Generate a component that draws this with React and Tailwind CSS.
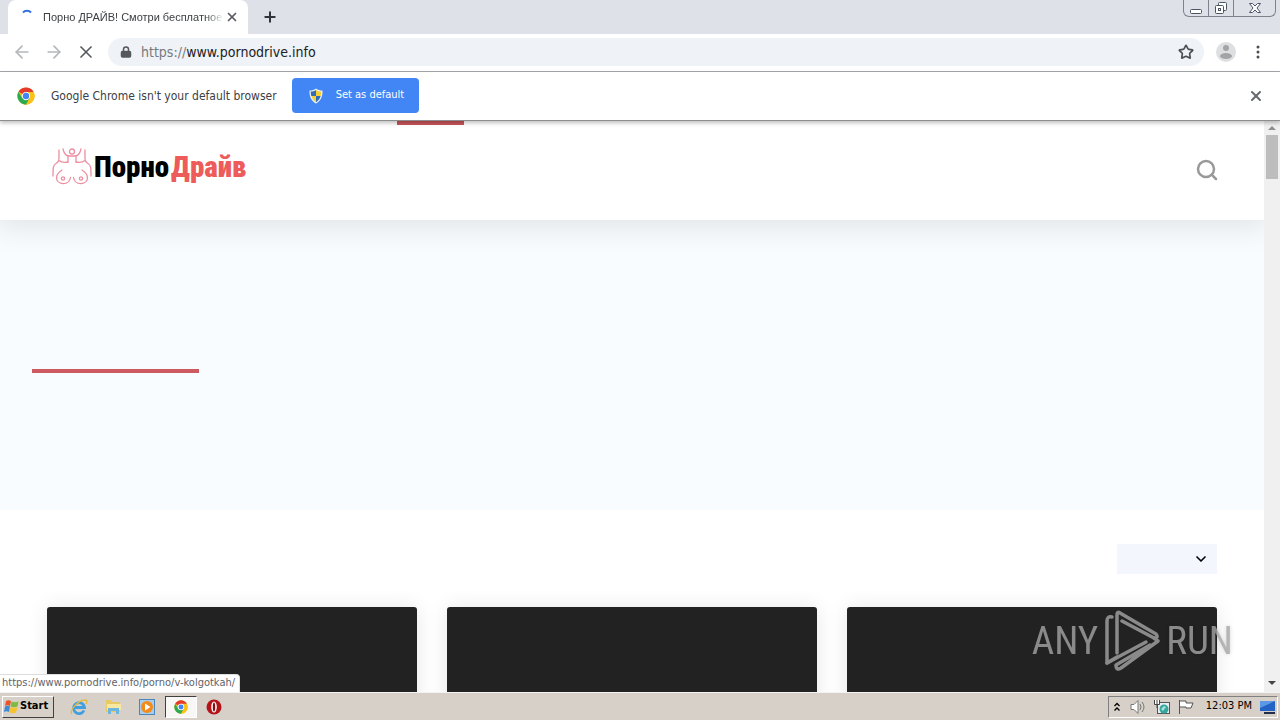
import { useState } from 'react';
import { ArrowLeft, ArrowRight, X, Plus, Lock, Star, Search, ChevronDown } from 'lucide-react';

const ui = "font-['DejaVu_Sans_Condensed','Noto_Sans',sans-serif]";

function ChromeLogo({ className }) {
  return (
    <svg viewBox="0 0 48 48" className={className} aria-hidden="true">
      <circle cx="24" cy="24" r="23" fill="#fbc116" />
      <path d="M24 24 4.1 12.5A23 23 0 0 1 43.9 12.5L44 13H24Z" fill="#e33b2e" />
      <path d="M4.1 12.5A23 23 0 0 0 24 47L34 30 24 24 14 30Z" fill="#2da94f" />
      <path d="M24 47 34 30 36 24 33 14H44.7A23 23 0 0 1 24 47Z" fill="#fbc116" />
      <circle cx="24" cy="24" r="11" fill="#fff" />
      <circle cx="24" cy="24" r="8.5" fill="#4285f4" />
    </svg>
  );
}

function TabStrip() {
  return (
    <header className="flex h-[34px] shrink-0 items-end justify-between bg-[#dee1e8]">
      <div className="flex h-full items-end pl-2">
        <div className="flex h-full w-60 items-center rounded-t-lg bg-white pr-2 pl-[11px]">
          <svg viewBox="0 0 16 16" className="mr-2 size-4 shrink-0" fill="none" stroke="#2f6fe0" strokeWidth="2">
            <path d="M4 3.5C6 1.3 10 1.3 12 3.5" />
          </svg>
          <span className="min-w-0 flex-1 mask-r-from-90% font-['Liberation_Sans',sans-serif] text-[11px] whitespace-nowrap text-[#3c4043]">
            Порно ДРАЙВ! Смотри бесплатное
          </span>
          <button aria-label="Close tab" className="grid size-4 place-items-center text-[#5a5d61]">
            <X className="size-3.5" strokeWidth={3} />
          </button>
        </div>
        <button aria-label="New tab" className="ml-3 grid h-full w-5 place-items-center text-[#303338]">
          <Plus className="size-4" strokeWidth={3} />
        </button>
      </div>
      <div className="mr-1 flex h-[17px] self-start rounded-b-md border border-t-0 border-[#7d828c] text-[#4b5563]">
        <button aria-label="Minimize" className="grid w-[25px] place-items-center border-r border-[#7d828c]">
          <svg viewBox="0 0 12 14" className="h-3.5 w-3" fill="#fff" stroke="currentColor">
            <rect x=".5" y="8.500" width="11" height="4" rx="1" />
          </svg>
        </button>
        <button aria-label="Restore" className="grid w-[25px] place-items-center border-r border-[#7d828c]">
          <svg viewBox="0 0 14 14" className="size-3.5" fill="#fff" stroke="currentColor">
            <rect x="4.500" y="1.500" width="8" height="8" rx="1" />
            <rect x="1.500" y="4.500" width="8" height="8" rx="1" />
            <rect x="4.500" y="7.500" width="2" height="2" />
          </svg>
        </button>
        <button aria-label="Close" className="grid w-[41px] place-items-center">
          <svg viewBox="0 0 12 12" className="size-3" fill="#fff" stroke="currentColor">
            <path d="M.5 1.500h3L6 4l2.500-2.500h3L8 6l3.500 4.500h-3L6 8l-2.500 2.500h-3L4 6Z" />
          </svg>
        </button>
      </div>
    </header>
  );
}

function Toolbar() {
  const [url, setUrl] = useState('https://www.pornodrive.info');
  const rest = url.replace(/^https:\/\//, '');

  return (
    <nav className="flex h-[38px] shrink-0 items-center border-b border-[#a5a7aa] bg-white px-3 pb-0.5">
      <button aria-label="Back" className="mr-3 text-[#b4b6b9]"><ArrowLeft className="size-5" /></button>
      <button aria-label="Forward" className="mr-3 text-[#b4b6b9]"><ArrowRight className="size-5" /></button>
      <button aria-label="Stop" className="mr-3 text-[#55585c]"><X className="size-5" /></button>
      <div className="flex h-7 flex-1 items-center rounded-full bg-[#eff2f6] pr-2.5 pl-3">
        <Lock className="mr-[9px] size-3 text-[#55585c] [&_rect]:fill-[#55585c]" strokeWidth={3} />
        <div className="relative flex-1 text-sm">
          <input
            aria-label="Address"
            value={url}
            onChange={(e) => setUrl(e.target.value)}
            className="block w-full bg-transparent text-transparent caret-black outline-none"
          />
          <span aria-hidden="true" className="pointer-events-none absolute inset-0 text-[#202124]">
            <span className="text-[#767a7f]">https://</span>{rest}
          </span>
        </div>
        <button aria-label="Bookmark this page" className="text-[#4b4e52]"><Star className="size-4" strokeWidth={2.5} /></button>
      </div>
      <button aria-label="Profile" className="ml-3">
        <svg viewBox="0 0 20 20" className="size-5">
          <circle cx="10" cy="10" r="10" fill="#dedfe1" />
          <circle cx="10" cy="6" r="3" fill="#a2a4a7" />
          <ellipse cx="10" cy="14" rx="6" ry="3" fill="#a2a4a7" />
        </svg>
      </button>
      <button aria-label="Menu" className="ml-3 grid w-5 place-items-center">
        <svg viewBox="0 0 4 14" className="h-3.5 w-1" fill="#4b4e52">
          <circle cx="2" cy="2" r="1.500" />
          <circle cx="2" cy="7" r="1.500" />
          <circle cx="2" cy="12" r="1.500" />
        </svg>
      </button>
    </nav>
  );
}

function DefaultBrowserBar() {
  return (
    <div className="relative z-10 flex h-[49px] shrink-0 items-center border-b border-[#8d8d8d] bg-white pr-4 pb-px pl-[17px] shadow-[0_2px_4px_rgba(0,0,0,0.25)]">
      <ChromeLogo className="size-[18px]" />
      <p className="ml-4 text-xs text-[#3c4043]">Google Chrome isn't your default browser</p>
      <button className="ml-[15px] flex h-[35px] w-[127px] items-center rounded bg-[#4285f4] pl-4 text-[11px] text-white">
        <svg viewBox="0 0 16 16" className="mr-3 size-4" aria-hidden="true">
          <path d="M8 .5C10 2 12 2.500 14.500 2.500C15 9 12 13.500 8 15.500C4 13.500 1 9 1.500 2.500C4 2.500 6 2 8 .5Z" fill="#e8eef7" />
          <path d="M8 2C6.500 3 5 3.500 2.800 3.600C2.800 5.500 2.900 7 3.300 8H8Z" fill="#2f6db5" />
          <path d="M8 2C9.500 3 11 3.500 13.200 3.600C13.200 5.500 13.100 7 12.700 8H8Z" fill="#f7d038" />
          <path d="M8 8H3.300C4.200 10.800 6 13 8 14.200Z" fill="#f7d038" />
          <path d="M8 8H12.700C11.800 10.800 10 13 8 14.200Z" fill="#2f6db5" />
        </svg>
        Set as default
      </button>
      <button aria-label="Dismiss" className="ml-auto text-[#66696d]"><X className="size-4" strokeWidth={3} /></button>
    </div>
  );
}

function SiteLogo() {
  return (
    <a href="#" aria-label="ПорноДрайв" className="mb-1.5 flex items-center gap-0.5">
      <svg viewBox="0 0 40 38" className="h-[38px] w-10" fill="none" stroke="#ee8fa0" strokeWidth="1.300" strokeLinecap="round">
        <circle cx="20" cy="3.500" r="2.500" />
        <path d="M11 1C12 5 14 8 17 8H23C26 8 28 5 29 1M16 8.500V14M24 8.500V14" />
        <path d="M7 2V10C7 13 6 14.500 4 15.500C1 17 1 20 1 28M33 2V10C33 13 34 14.500 36 15.500C39 17 39 20 39 28M7 12.500C10 15 13 14.500 16 14M33 12.500C30 15 27 14.500 24 14" />
        <path d="M10 22C7 24 4.500 27 4.500 30C5 37 17 38 18.500 29.500M30 22C33 24 35.500 27 35.500 30C35 37 23 38 21.500 29.500" />
        <circle cx="11" cy="30.500" r="1.600" />
        <circle cx="29" cy="30.500" r="1.600" />
      </svg>
      <span className="flex gap-0.5 font-['Roboto_Condensed','Open_Sans_Condensed','Roboto',sans-serif] text-[29px] leading-9 font-black text-black">
        Порно<span className="text-[#ee5b5b]">Драйв</span>
      </span>
    </a>
  );
}

function Page() {
  return (
    <main className="flex min-w-0 flex-1 flex-col overflow-hidden bg-white">
      <div className="z-[1] shrink-0 bg-white shadow-[0_0_30px_6px_rgba(0,0,0,0.1)]">
        <div className="ml-[397px] h-1 w-[67px] bg-[#c8545a]" />
        <div className="flex h-[95px] items-center justify-between pr-[45px] pb-1.5 pl-[52px]">
          <SiteLogo />
          <button aria-label="Search" className="text-[#999]"><Search className="size-6" strokeWidth={2.5} /></button>
        </div>
      </div>
      <section className="flex h-[290px] shrink-0 items-center bg-[#f8fcff] pl-8">
        <div className="mt-3 h-1 w-[167px] bg-[#cd5a60]" />
      </section>
      <section className="flex min-h-0 flex-1 flex-col px-[47px] pt-[34px]">
        <div className="relative shrink-0 self-end">
          <select aria-label="Sort by" className="block h-[30px] w-[100px] appearance-none bg-[#f3f6fd]" />
          <ChevronDown className="pointer-events-none absolute top-[7px] right-2 size-4 text-black" strokeWidth={2.5} />
        </div>
        <div className="mt-[33px] grid min-h-0 flex-1 grid-cols-3 gap-[30px]">
          {[0, 1, 2].map((i) => (
            <a key={i} href="#" aria-label="Video" className="h-60 rounded-[3px] bg-[#222] shadow-[0_0_20px_rgba(0,0,0,0.1)]" />
          ))}
        </div>
      </section>
    </main>
  );
}

function Scrollbar() {
  return (
    <div className="flex w-4 shrink-0 flex-col items-center bg-[#f0f0f0]" aria-hidden="true">
      <svg viewBox="0 0 8 4" className="my-[5px] h-1 w-2" fill="#8d8d8d"><path d="M0 4 4 0 8 4Z" /></svg>
      <div className="h-11 w-3 bg-[#bdbdbd]" />
      <svg viewBox="0 0 8 4" className="mt-auto mb-[7px] h-1 w-2" fill="#444"><path d="M0 0 4 4 8 0Z" /></svg>
    </div>
  );
}

function Watermark() {
  return (
    <div className="pointer-events-none absolute right-[47px] bottom-5 flex items-center gap-1.5 font-['Roboto_Condensed','Open_Sans_Condensed','Roboto',sans-serif] text-[39px] leading-none text-[#a4a4a4] opacity-80">
      <span>ANY</span>
      <svg viewBox="0 0 56 62" className="h-[62px] w-14" fill="none" stroke="currentColor" strokeWidth="3.500" strokeLinejoin="round" strokeLinecap="round">
        <path d="M13 43V5Q13 1 16 3L52 24Q55 28 50 28L18 11" />
        <path d="M8 7Q3 6 3 11V53L42 32" />
        <path d="M3 53 13 47" />
        <path d="M50 28 54 31 17 58Q12 61 12 55L46 35" />
      </svg>
      <span className="[text-shadow:0_0_4px_rgba(0,0,0,0.2)]">RUN</span>
    </div>
  );
}

function Taskbar() {
  return (
    <footer className="flex h-7 shrink-0 items-center justify-between border-t border-[#f4f2ee] bg-[#d6d0c8] px-0.5 text-black">
      <div className="flex items-center">
        <button className="flex h-[22px] w-[52px] items-center border border-t-white border-r-[#404040] border-b-[#404040] border-l-white text-[11px] font-bold">
          <svg viewBox="0 0 16 16" className="mr-px size-4 shrink-0" aria-hidden="true">
            <path d="M3 2C5 1 6 1 8 2L7 7C5 6 4 6 2 7Z" fill="#e8542c" />
            <path d="M8.500 2.500C11 3.500 13 3.500 15.500 2.500L14.500 7.500C12 8.500 10 8.500 7.500 7.500Z" fill="#7dbb42" />
            <path d="M2 7.500C4 6.500 5 6.500 7 7.500L6 13C4 12 3 12 1 13Z" fill="#3c8ad8" />
            <path d="M7.500 8C10 9 12 9 14.500 8L13 13.500C11 14.500 9 14.500 6.500 13.500Z" fill="#f6c32c" />
          </svg>
          Start
        </button>
        <button aria-label="Internet Explorer" className="ml-2 grid h-[22px] w-[34px] place-items-center">
          <svg viewBox="0 0 18 18" className="size-[18px]" fill="none">
            <path d="M14 12.500A5.500 5.500 0 1 1 14.500 9.500H5" stroke="#3f9fdf" strokeWidth="2.800" />
            <path d="M2 16C-1 13 8 2 15 2C18 2 17 4 16 6" stroke="#e5b93c" strokeWidth="1.300" />
          </svg>
        </button>
        <button aria-label="Explorer" className="grid h-[22px] w-[34px] place-items-center">
          <svg viewBox="0 0 18 18" className="size-[18px]">
            <path d="M2 2H7L8 4H16V14H2Z" fill="#e9c964" />
            <path d="M3 6H17V12H3Z" fill="#f8e7a0" />
            <path d="M4 16V10H15V16H12V13H7V16Z" fill="#6cb5de" />
          </svg>
        </button>
        <button aria-label="Media Player" className="grid h-[22px] w-[34px] place-items-center">
          <svg viewBox="0 0 16 16" className="size-4">
            <rect x=".5" y=".5" width="15" height="15" fill="#a9cdea" stroke="#4d86b8" />
            <circle cx="8" cy="8" r="6" fill="#f28a1c" />
            <path d="M6 4.500 11.500 8 6 11.500Z" fill="#fff" />
          </svg>
        </button>
        <button aria-label="Google Chrome" className="ml-px grid h-[22px] w-8 place-items-center border border-t-[#404040] border-r-white border-b-white border-l-[#404040] bg-[#f8f7f5]">
          <ChromeLogo className="size-3.5" />
        </button>
        <button aria-label="Opera" className="grid h-[22px] w-[34px] place-items-center">
          <svg viewBox="0 0 16 16" className="size-4">
            <circle cx="8" cy="8" r="7.500" fill="#b3141a" />
            <ellipse cx="8" cy="8" rx="2.800" ry="5.500" fill="#fff" />
            <ellipse cx="8" cy="8" rx="1.200" ry="4.500" fill="#8b0d12" />
          </svg>
        </button>
      </div>
      <div className="flex h-[22px] items-center border border-t-[#808080] border-r-white border-b-white border-l-[#808080] pr-px pl-[5px] text-[11px]">
        <svg viewBox="0 0 6 10" className="mr-2.5 h-2.5 w-1.5" fill="none" stroke="#000" strokeWidth="1.300">
          <path d="M.5 4 3 1.500 5.500 4M.5 8.500 3 6 5.500 8.500" />
        </svg>
        <svg viewBox="0 0 16 16" className="mr-2 size-4" fill="#fff" stroke="#777">
          <path d="M1 5.500H4L8 1.500V14.500L4 10.500H1Z" />
          <path d="M10 5Q12 8 10 11M12 3Q16 8 12 13" fill="none" />
        </svg>
        <svg viewBox="0 0 16 16" className="mr-2 size-4">
          <rect x="3.500" y="3.500" width="12" height="11" fill="#e7edf0" stroke="#555" />
          <path d="M.5 1V5.500H5.500V1M3 1V9" stroke="#444" fill="#fff" />
          <circle cx="10" cy="10" r="4.500" fill="#35a5a0" />
          <path d="M7 10 10 7 12 8 9 12Z" fill="#a9e2d2" />
        </svg>
        <svg viewBox="0 0 16 16" className="mr-3 size-4" fill="#fff" stroke="#555">
          <path d="M1.500 1V15M2 2H8V4H15L13 9H8V8H2" />
        </svg>
        <time className="mr-2">12:03 PM</time>
        <svg viewBox="0 0 16 14" className="h-3.5 w-4">
          <path d="M0 1H15V11H0Z" fill="#2463c4" />
          <path d="M0 1H15L0 8Z" fill="#5b98e6" />
          <path d="M4 12H15V14H4Z" fill="#222f4a" />
        </svg>
      </div>
    </footer>
  );
}

export default function App() {
  return (
    <div className={`flex h-screen flex-col overflow-hidden bg-white ${ui}`}>
      <TabStrip />
      <Toolbar />
      <DefaultBrowserBar />
      <div className="relative flex min-h-0 flex-1">
        <Page />
        <Scrollbar />
        <Watermark />
        <div className="absolute bottom-0 left-0 h-[18px] rounded-tr border-t border-r border-[#ddd] bg-white pr-1 pl-0.5 text-[11px] leading-4 text-[#5f6368]">
          https://www.pornodrive.info/porno/v-kolgotkah/
        </div>
      </div>
      <Taskbar />
    </div>
  );
}
